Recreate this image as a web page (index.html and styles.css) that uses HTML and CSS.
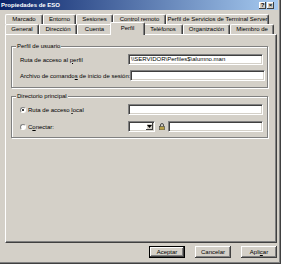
FILE: index.html
```html
<!DOCTYPE html>
<html lang="es">
<head>
<meta charset="utf-8">
<title>Propiedades de ESO</title>
<link rel="stylesheet" href="styles.css">
</head>
<body>
<div class="window">
  <div class="titlebar">
    <span class="title">Propiedades de ESO</span>
    <div class="caption-btns">
      <span class="cbtn">?</span>
      <span class="cbtn">×</span>
    </div>
  </div>
  <div class="tabs">
    <div class="tabrow tabrow-back">
      <div class="tab">Marcado</div>
      <div class="tab">Entorno</div>
      <div class="tab">Sesiones</div>
      <div class="tab">Control remoto</div>
      <div class="tab">Perfil de Servicios de Terminal Server</div>
    </div>
    <div class="tabrow tabrow-front">
      <div class="tab">General</div>
      <div class="tab">Dirección</div>
      <div class="tab">Cuenta</div>
      <div class="tab tab-active">Perfil</div>
      <div class="tab">Teléfonos</div>
      <div class="tab">Organización</div>
      <div class="tab">Miembro de</div>
    </div>
  </div>
  <div class="panel">
    <fieldset class="group group-user">
      <legend>Perfil de usuario</legend>
      <div class="row">
        <span class="label">Ruta de acceso al <u>p</u>erfil</span>
        <span class="field">\\SERVIDOR\Perfiles$\alumno.man</span>
      </div>
      <div class="row">
        <span class="label">Archivo de comando<u>s</u> de inicio de sesión:</span>
        <span class="field"></span>
      </div>
    </fieldset>
    <fieldset class="group group-home">
      <legend>Directorio principal</legend>
      <div class="row">
        <span class="radio radio-on"></span>
        <span class="label">Ruta de acceso <u>l</u>ocal</span>
        <span class="field"></span>
      </div>
      <div class="row">
        <span class="radio"></span>
        <span class="label">C<u>o</u>nectar:</span>
        <span class="combo"><span class="combo-btn"><svg width="5" height="3" viewBox="0 0 5 3"><path d="M0 0H5L2.5 3Z" fill="#000"/></svg></span></span>
        <svg class="lock" width="6" height="7" viewBox="0 0 6 7"><path d="M1.5 3.5V2a1.5 1.5 0 0 1 3 0v1.5" fill="none" stroke="#404040" stroke-width="0.9"/><rect x="0.5" y="3.5" width="5" height="3.5" fill="#b8a048" stroke="#404040" stroke-width="0.6"/></svg>
        <span class="field field-sm"></span>
      </div>
    </fieldset>
  </div>
  <div class="footer">
    <button class="btn btn-default">Aceptar</button>
    <button class="btn">Cancelar</button>
    <button class="btn">Apli<u>c</u>ar</button>
  </div>
</div>
</body>
</html>
```
FILE: styles.css
```css
* { box-sizing: border-box; }
html, body { margin: 0; padding: 0; }
body {
  width: 281px;
  height: 264px;
  overflow: hidden;
  background: #d4d0c8;
  font-family: "Liberation Sans", Arial, sans-serif;
  font-size: 6px;
  color: #000;
}
.window {
  width: 281px;
  height: 264px;
  display: flex;
  flex-direction: column;
  padding: 0 3px 2px 0;
  background: #d4d0c8;
  box-shadow: inset -1px -1px #404040, inset -2px -2px #808080;
}
.titlebar {
  height: 10px;
  flex: none;
  display: flex;
  align-items: center;
  justify-content: space-between;
  padding: 0 4px 0 1px;
  background: linear-gradient(to right, #0a246a, #a6caf0);
}
.title {
  color: #fff;
  font-weight: bold;
  line-height: 10px;
}
.caption-btns {
  display: flex;
  gap: 1px;
}
.cbtn {
  width: 7px;
  height: 7px;
  background: #d4d0c8;
  box-shadow: inset -1px -1px #404040, inset 1px 1px #fff;
  font-weight: bold;
  font-size: 6px;
  line-height: 7px;
  text-align: center;
}
.tabs {
  flex: none;
  margin: 4px 1px 0 5px;
  height: 20px;
}
.tabrow {
  display: grid;
  height: 10px;
}
.tabrow-back { grid-template-columns: 38px 33px 37px 53px 103px; }
.tabrow-front { grid-template-columns: 34px 38px 35px 31px 40px 47px 44px; }
.tab {
  border-top: 1px solid #fff;
  border-left: 1px solid #fff;
  border-right: 1px solid #404040;
  box-shadow: inset -1px 0 #808080;
  border-radius: 2px 2px 0 0;
  background: #d4d0c8;
  text-align: center;
  line-height: 9px;
  white-space: nowrap;
  overflow: hidden;
}
.tab-active {
  margin: -2px -2px -1px;
  position: relative;
  z-index: 1;
  line-height: 11px;
}
.panel {
  flex: 1;
  margin: 0 1px 0 5px;
  border-top: 1px solid #fff;
  border-left: 1px solid #fff;
  border-right: 1px solid #404040;
  border-bottom: 1px solid #404040;
  box-shadow: inset -1px -1px #808080;
  padding: 7px 8px 0 5px;
}
.group {
  margin: 0;
  min-width: 0;
  border: 1px solid #808080;
  box-shadow: inset 1px 1px #fff, 1px 1px #fff;
  padding: 4px 4px 6px 8px;
}
.group-home {
  margin-top: 4px;
  padding-bottom: 5px;
}
.group legend {
  margin-left: -4px;
  padding: 0 1px;
  line-height: 8px;
  background: #d4d0c8;
}
.row {
  display: flex;
  align-items: center;
  height: 11px;
}
.row + .row { margin-top: 5px; }
.group-home .row + .row { margin-top: 6px; }
.label {
  flex: 1;
  white-space: nowrap;
}
.field {
  flex: none;
  width: 135px;
  height: 11px;
  background: #fff;
  border: 1px solid;
  border-color: #808080 #fff #fff #808080;
  box-shadow: inset 1px 1px #404040, inset -1px -1px #d4d0c8;
  padding-left: 2px;
  line-height: 9px;
  white-space: nowrap;
}
.field-sm { width: 95px; }
.radio {
  flex: none;
  width: 6px;
  height: 6px;
  margin-right: 2px;
  border-radius: 50%;
  background: #fff;
  border: 1px solid;
  border-color: #808080 #fff #fff #808080;
  display: flex;
  align-items: center;
  justify-content: center;
}
.radio-on::after {
  content: "";
  width: 2px;
  height: 2px;
  border-radius: 50%;
  background: #000;
}
.combo {
  flex: none;
  width: 27px;
  height: 11px;
  background: #fff;
  border: 1px solid;
  border-color: #808080 #fff #fff #808080;
  box-shadow: inset 1px 1px #404040, inset -1px -1px #d4d0c8;
  display: flex;
  justify-content: flex-end;
  padding: 1px;
}
.combo-btn {
  width: 7px;
  height: 100%;
  background: #d4d0c8;
  box-shadow: inset -1px -1px #404040, inset 1px 1px #fff;
  display: flex;
  align-items: center;
  justify-content: center;
}
.lock {
  flex: none;
  margin: 0 3px 0 4px;
}
.footer {
  flex: none;
  height: 19px;
  display: flex;
  justify-content: flex-end;
  align-items: flex-start;
  gap: 10px;
  padding-top: 3px;
  margin-right: 1px;
}
.btn {
  width: 36px;
  height: 12px;
  padding: 0;
  border: none;
  background: #d4d0c8;
  box-shadow: inset -1px -1px #404040, inset 1px 1px #fff, inset -2px -2px #808080;
  font-family: inherit;
  font-size: 6px;
  color: #000;
  line-height: 10px;
}
.btn-default {
  border: 1px solid #000;
}
```
